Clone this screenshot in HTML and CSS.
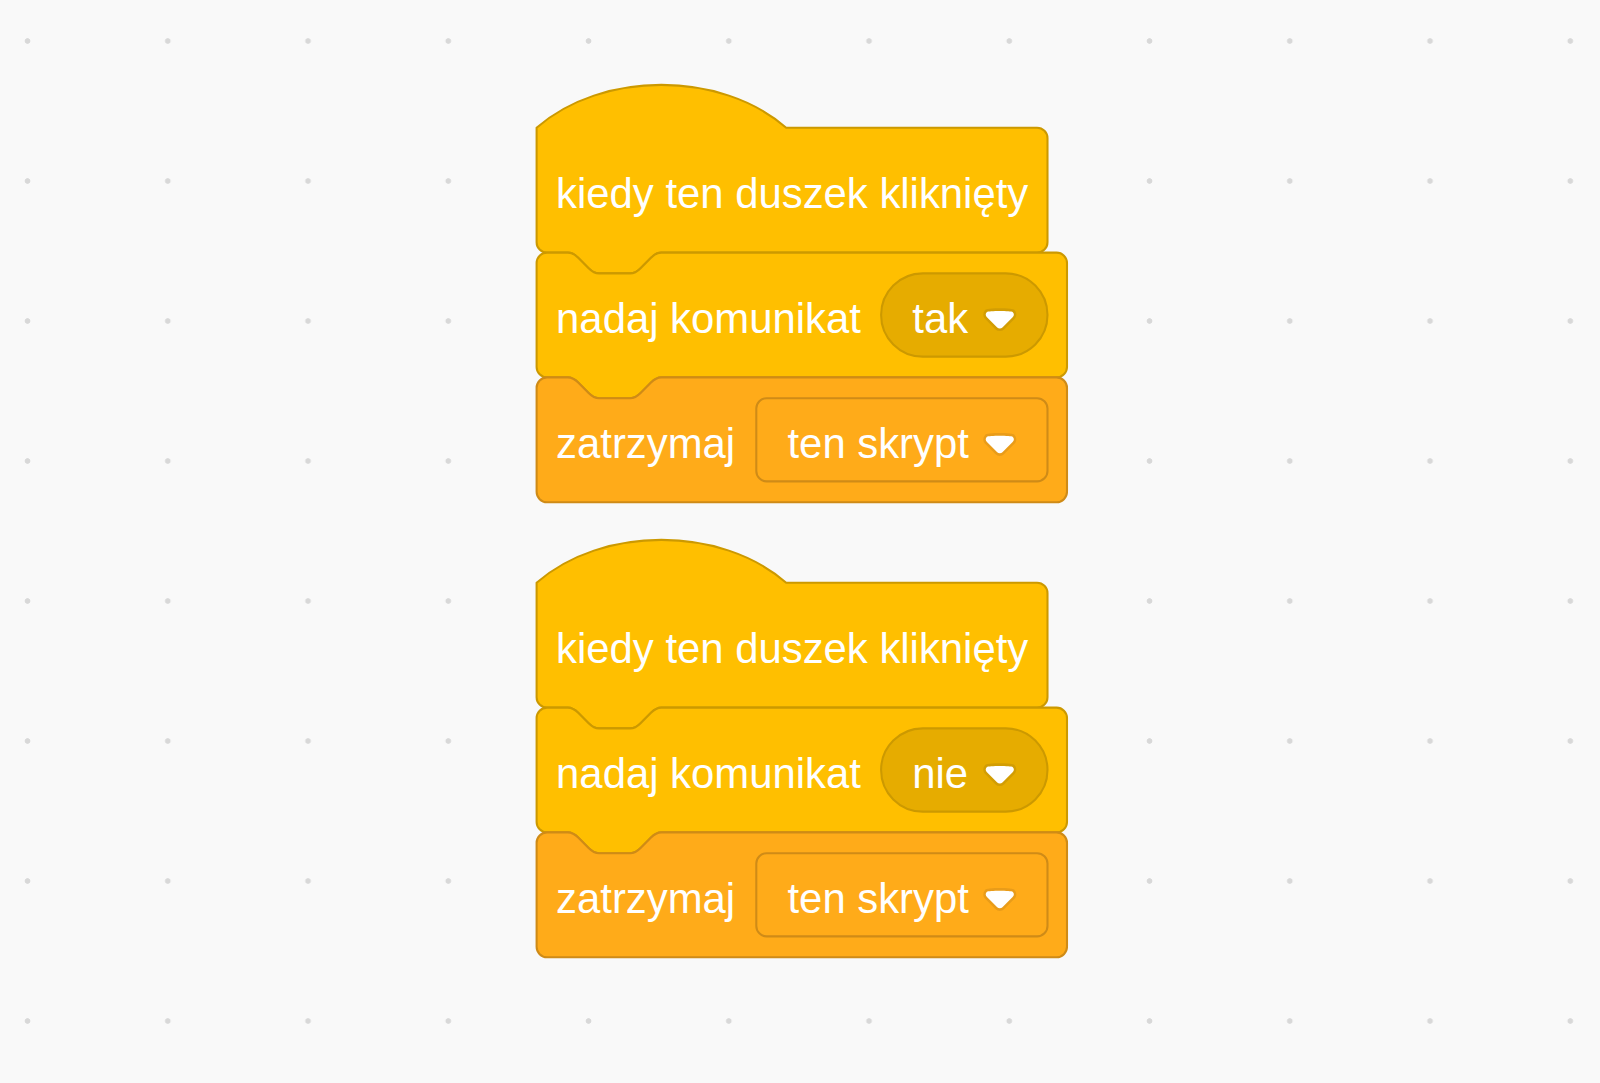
FILE: index.html
```html
<!DOCTYPE html>
<html lang="pl">
<head>
	<meta charset="UTF-8">
	<title>Skrypty duszka</title>
	<link rel="stylesheet" href="styles.css">
</head>
<body>
	<div class="workspace">
		<!-- skrypt 1 -->
		<svg class="stack" viewBox="-1 -18 208 164">
			<g class="block event">
				<path class="hat" d="M0,0 c25,-22 71,-22 96,0 H192.5 a4,4 0 0 1 4,4 V44 a4,4 0 0 1 -4,4 H48 c-2,0 -3,1 -4,2 l-4,4 c-1,1 -2,2 -4,2 h-12 c-2,0 -3,-1 -4,-2 l-4,-4 c-1,-1 -2,-2 -4,-2 H4 a4,4 0 0 1 -4,-4 Z"/>
				<text class="label" x="7.5" y="30.9">kiedy ten duszek kliknięty</text>
			</g>
			<g class="block event" transform="translate(0,48)">
				<path d="M0,4 a4,4 0 0 1 4,-4 H12 c2,0 3,1 4,2 l4,4 c1,1 2,2 4,2 h12 c2,0 3,-1 4,-2 l4,-4 c1,-1 2,-2 4,-2 H200 a4,4 0 0 1 4,4 V44 a4,4 0 0 1 -4,4 H48 c-2,0 -3,1 -4,2 l-4,4 c-1,1 -2,2 -4,2 h-12 c-2,0 -3,-1 -4,-2 l-4,-4 c-1,-1 -2,-2 -4,-2 H4 a4,4 0 0 1 -4,-4 Z"/>
				<text class="label" x="7.5" y="30.9">nadaj komunikat</text>
				<g class="menu round" transform="translate(132.5,8)">
					<rect width="64" height="32" rx="16" ry="16"/>
					<text class="label" x="12" y="22.9">tak</text>
					<g class="arrow" transform="translate(39.3,13.4)">
						<path class="arrow-shade" d="M12.71,2.44A2.41,2.41,0,0,1,12,4.16L8.08,8.08a2.45,2.45,0,0,1-3.45,0L0.72,4.16A2.42,2.42,0,0,1,0,2.44,2.48,2.48,0,0,1,0.71,0.71C1,0.47,1.43,0,6.36,0S11.75,0.46,12,0.71A2.44,2.44,0,0,1,12.71,2.44Z"/>
						<path class="arrow-fill" d="M6.36,7.79a1.43,1.43,0,0,1-1-0.42L1.42,3.45a1.44,1.44,0,0,1,0-2c0.56-0.56,9.31-0.56,9.87,0a1.44,1.44,0,0,1,0,2L7.37,7.37A1.43,1.43,0,0,1,6.36,7.79Z"/>
					</g>
				</g>
			</g>
			<g class="block control" transform="translate(0,96)">
				<path d="M0,4 a4,4 0 0 1 4,-4 H12 c2,0 3,1 4,2 l4,4 c1,1 2,2 4,2 h12 c2,0 3,-1 4,-2 l4,-4 c1,-1 2,-2 4,-2 H200 a4,4 0 0 1 4,4 V44 a4,4 0 0 1 -4,4 H4 a4,4 0 0 1 -4,-4 Z"/>
				<text class="label" x="7.5" y="30.9">zatrzymaj</text>
				<g class="menu square" transform="translate(84.5,8)">
					<rect width="112" height="32" rx="4" ry="4"/>
					<text class="label" x="12" y="22.9">ten skrypt</text>
					<g class="arrow" transform="translate(87.3,13.4)">
						<path class="arrow-shade" d="M12.71,2.44A2.41,2.41,0,0,1,12,4.16L8.08,8.08a2.45,2.45,0,0,1-3.45,0L0.72,4.16A2.42,2.42,0,0,1,0,2.44,2.48,2.48,0,0,1,0.71,0.71C1,0.47,1.43,0,6.36,0S11.75,0.46,12,0.71A2.44,2.44,0,0,1,12.71,2.44Z"/>
						<path class="arrow-fill" d="M6.36,7.79a1.43,1.43,0,0,1-1-0.42L1.42,3.45a1.44,1.44,0,0,1,0-2c0.56-0.56,9.31-0.56,9.87,0a1.44,1.44,0,0,1,0,2L7.37,7.37A1.43,1.43,0,0,1,6.36,7.79Z"/>
					</g>
				</g>
			</g>
		</svg>

		<!-- skrypt 2 -->
		<svg class="stack" viewBox="-1 -18 208 164">
			<g class="block event">
				<path class="hat" d="M0,0 c25,-22 71,-22 96,0 H192.5 a4,4 0 0 1 4,4 V44 a4,4 0 0 1 -4,4 H48 c-2,0 -3,1 -4,2 l-4,4 c-1,1 -2,2 -4,2 h-12 c-2,0 -3,-1 -4,-2 l-4,-4 c-1,-1 -2,-2 -4,-2 H4 a4,4 0 0 1 -4,-4 Z"/>
				<text class="label" x="7.5" y="30.9">kiedy ten duszek kliknięty</text>
			</g>
			<g class="block event" transform="translate(0,48)">
				<path d="M0,4 a4,4 0 0 1 4,-4 H12 c2,0 3,1 4,2 l4,4 c1,1 2,2 4,2 h12 c2,0 3,-1 4,-2 l4,-4 c1,-1 2,-2 4,-2 H200 a4,4 0 0 1 4,4 V44 a4,4 0 0 1 -4,4 H48 c-2,0 -3,1 -4,2 l-4,4 c-1,1 -2,2 -4,2 h-12 c-2,0 -3,-1 -4,-2 l-4,-4 c-1,-1 -2,-2 -4,-2 H4 a4,4 0 0 1 -4,-4 Z"/>
				<text class="label" x="7.5" y="30.9">nadaj komunikat</text>
				<g class="menu round" transform="translate(132.5,8)">
					<rect width="64" height="32" rx="16" ry="16"/>
					<text class="label" x="12" y="22.9">nie</text>
					<g class="arrow" transform="translate(39.3,13.4)">
						<path class="arrow-shade" d="M12.71,2.44A2.41,2.41,0,0,1,12,4.16L8.08,8.08a2.45,2.45,0,0,1-3.45,0L0.72,4.16A2.42,2.42,0,0,1,0,2.44,2.48,2.48,0,0,1,0.71,0.71C1,0.47,1.43,0,6.36,0S11.75,0.46,12,0.71A2.44,2.44,0,0,1,12.71,2.44Z"/>
						<path class="arrow-fill" d="M6.36,7.79a1.43,1.43,0,0,1-1-0.42L1.42,3.45a1.44,1.44,0,0,1,0-2c0.56-0.56,9.31-0.56,9.87,0a1.44,1.44,0,0,1,0,2L7.37,7.37A1.43,1.43,0,0,1,6.36,7.79Z"/>
					</g>
				</g>
			</g>
			<g class="block control" transform="translate(0,96)">
				<path d="M0,4 a4,4 0 0 1 4,-4 H12 c2,0 3,1 4,2 l4,4 c1,1 2,2 4,2 h12 c2,0 3,-1 4,-2 l4,-4 c1,-1 2,-2 4,-2 H200 a4,4 0 0 1 4,4 V44 a4,4 0 0 1 -4,4 H4 a4,4 0 0 1 -4,-4 Z"/>
				<text class="label" x="7.5" y="30.9">zatrzymaj</text>
				<g class="menu square" transform="translate(84.5,8)">
					<rect width="112" height="32" rx="4" ry="4"/>
					<text class="label" x="12" y="22.9">ten skrypt</text>
					<g class="arrow" transform="translate(87.3,13.4)">
						<path class="arrow-shade" d="M12.71,2.44A2.41,2.41,0,0,1,12,4.16L8.08,8.08a2.45,2.45,0,0,1-3.45,0L0.72,4.16A2.42,2.42,0,0,1,0,2.44,2.48,2.48,0,0,1,0.71,0.71C1,0.47,1.43,0,6.36,0S11.75,0.46,12,0.71A2.44,2.44,0,0,1,12.71,2.44Z"/>
						<path class="arrow-fill" d="M6.36,7.79a1.43,1.43,0,0,1-1-0.42L1.42,3.45a1.44,1.44,0,0,1,0-2c0.56-0.56,9.31-0.56,9.87,0a1.44,1.44,0,0,1,0,2L7.37,7.37A1.43,1.43,0,0,1,6.36,7.79Z"/>
					</g>
				</g>
			</g>
		</svg>
	</div>
</body>
</html>
```

FILE: styles.css
```css
body {
	margin:0;
	background:#f9f9f9;
}
/* obszar roboczy z kropkami siatki */
.workspace {
	width:1600px;
	height:1083px;
	box-sizing:border-box;
	padding:81.2px 0 0 533.9px;
	display:flex;
	flex-direction:column;
	gap:28.6px;
	overflow:hidden;
	background-color:#f9f9f9;
	background-image:radial-gradient(circle, #d8d8d8 2.4px, rgba(216,216,216,0) 3.2px);
	background-size:140.25px 140px;
	background-position:-42.6px -29px;
}
.stack {
	display:block;
	width:540.8px;
	height:426.4px;
	overflow:visible;
}
.block > path {
	stroke-width:0.8;
	stroke-linejoin:round;
}
.event > path {
	fill:#ffbf00;
	stroke:#cc9900;
}
.control > path {
	fill:#ffab19;
	stroke:#cf8b17;
}
.label {
	fill:#fff;
	font-family:"Liberation Sans", Arial, sans-serif;
	font-size:16.1px;
}
.menu rect {
	stroke-width:0.8;
}
.round rect {
	fill:#e6ac00;
	stroke:#cc9900;
}
.square rect {
	fill:#ffab19;
	stroke:#cf8b17;
}
.arrow-shade {
	fill:#231f20;
	opacity:0.1;
}
.arrow-fill {
	fill:#fff;
}
```
